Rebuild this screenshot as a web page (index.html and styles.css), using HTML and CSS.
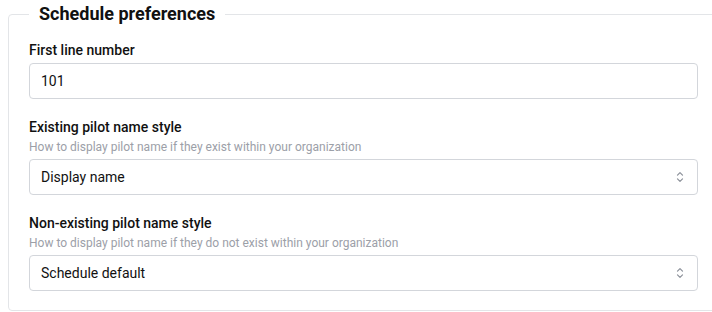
FILE: index.html
```html
<!DOCTYPE html>
<html lang="en">
<head>
    <meta charset="UTF-8">
    <meta name="viewport" content="width=device-width, initial-scale=1.0">
    <title>Schedule preferences</title>
    <link rel="stylesheet" href="styles.css">
</head>
<body>
    <fieldset class="prefs">
        <legend>Schedule preferences</legend>

        <div class="field">
            <label for="first-line">First line number</label>
            <input type="text" id="first-line" class="text-input" value="101">
        </div>

        <div class="field">
            <label for="existing-style">Existing pilot name style</label>
            <p class="hint">How to display pilot name if they exist within your organization</p>
            <div class="select-box">
                <select id="existing-style">
                    <option>Display name</option>
                </select>
                <svg class="chevrons" width="8" height="12" viewBox="0 0 8 12" fill="none" stroke="#8b9099" stroke-width="1.2" stroke-linecap="round" stroke-linejoin="round">
                    <path d="M1.5 4.2 L4 1.7 L6.5 4.2"/>
                    <path d="M1.5 7.8 L4 10.3 L6.5 7.8"/>
                </svg>
            </div>
        </div>

        <div class="field">
            <label for="missing-style">Non-existing pilot name style</label>
            <p class="hint">How to display pilot name if they do not exist within your organization</p>
            <div class="select-box">
                <select id="missing-style">
                    <option>Schedule default</option>
                </select>
                <svg class="chevrons" width="8" height="12" viewBox="0 0 8 12" fill="none" stroke="#8b9099" stroke-width="1.2" stroke-linecap="round" stroke-linejoin="round">
                    <path d="M1.5 4.2 L4 1.7 L6.5 4.2"/>
                    <path d="M1.5 7.8 L4 10.3 L6.5 7.8"/>
                </svg>
            </div>
        </div>
    </fieldset>
</body>
</html>
```

FILE: styles.css
```css
html, body {
    overflow: hidden;
}

body {
    font-family: Roboto, "Liberation Sans", Arial, sans-serif;
    color: #111111;
    background: #ffffff;
    margin: 0 0 0 8px;
}

.prefs {
    width: 712px;
    box-sizing: border-box;
    margin: 0;
    padding: 12px 21px 19px 20px;
    border: 1px solid #e3e5e8;
    border-radius: 4px;
}

.prefs legend {
    font-size: 18px;
    font-weight: 700;
    line-height: 28px;
    padding: 0 10px;
}

.field {
    display: flex;
    flex-direction: column;
    margin-bottom: 18px;
}

.field:last-child {
    margin-bottom: 0;
}

.field label {
    font-size: 14px;
    font-weight: 500;
    line-height: 20px;
    margin-bottom: 3px;
}

.hint {
    margin: -1px 0 4px;
    font-size: 12px;
    line-height: 16px;
    color: #9ca0a8;
}

.text-input,
.select-box select {
    box-sizing: border-box;
    width: 100%;
    height: 36px;
    padding: 0 11px;
    font-family: inherit;
    font-size: 14px;
    color: #111111;
    background: #ffffff;
    border: 1px solid #d3d6db;
    border-radius: 4px;
    outline: none;
}

.select-box {
    position: relative;
}

.select-box select {
    appearance: none;
    -webkit-appearance: none;
}

.chevrons {
    position: absolute;
    right: 14px;
    top: 12px;
    pointer-events: none;
}
```
